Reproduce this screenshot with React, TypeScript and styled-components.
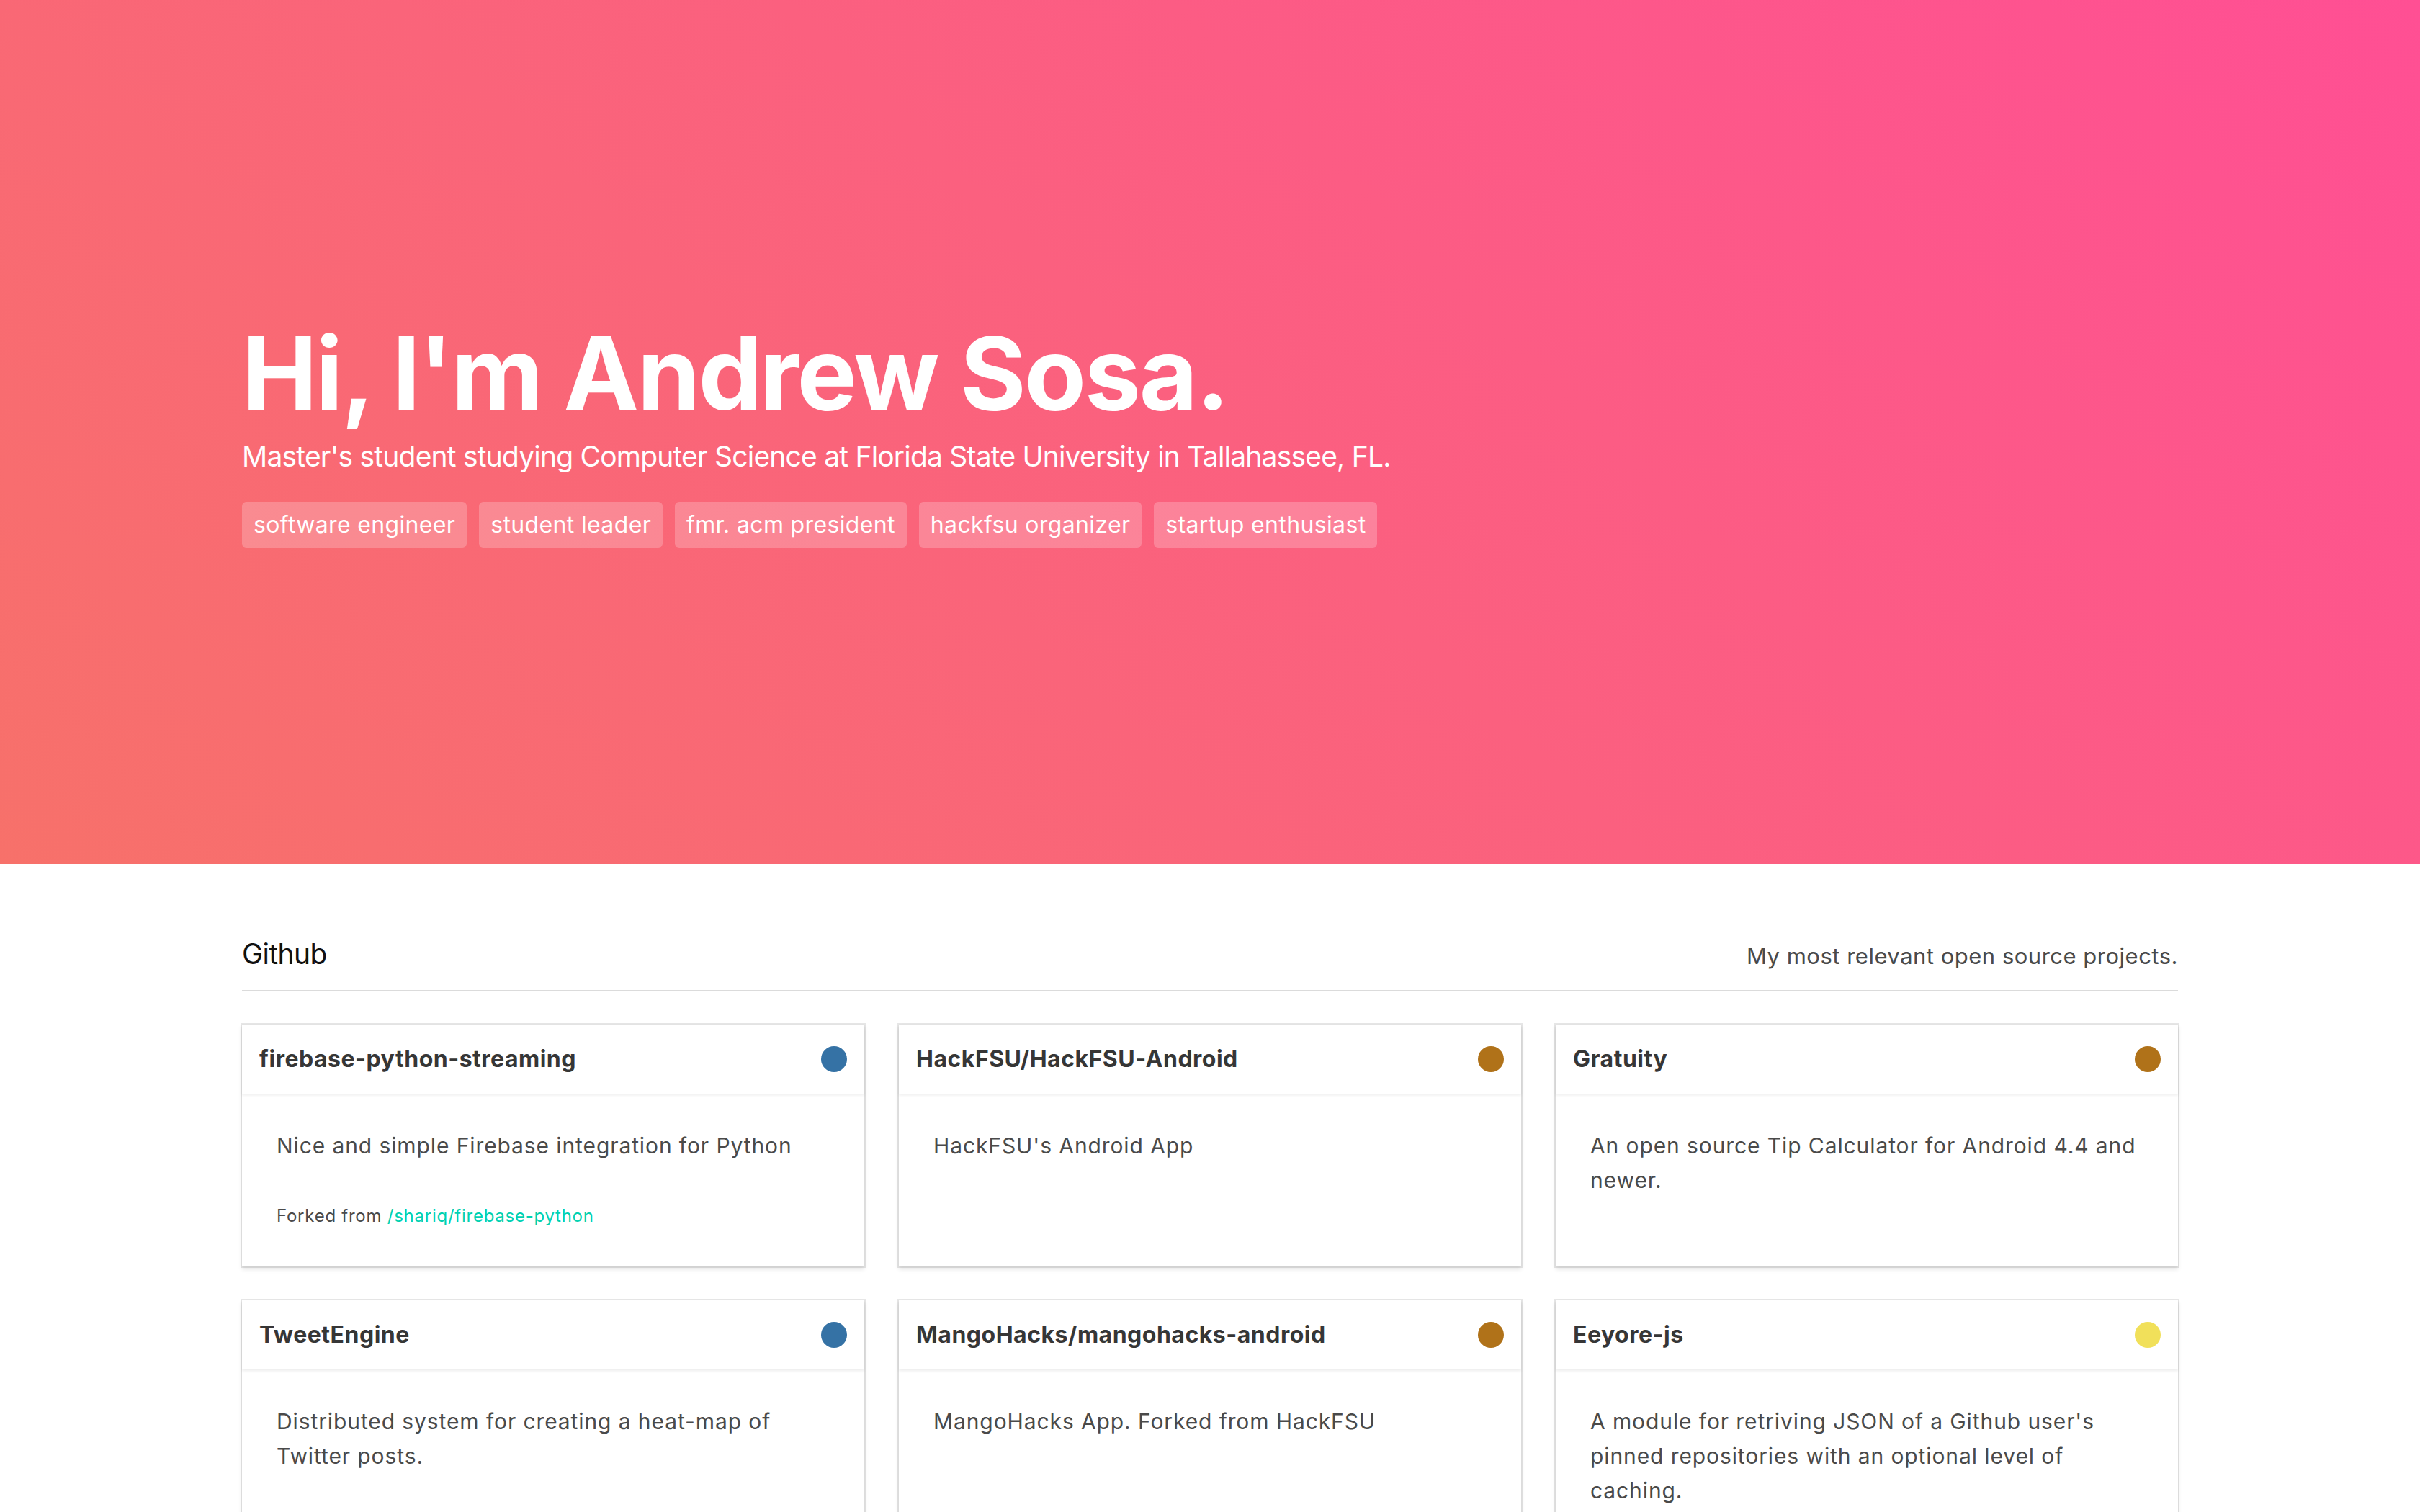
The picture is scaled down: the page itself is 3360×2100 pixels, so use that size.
import React from "react";
import styled, { createGlobalStyle } from "styled-components";

const GlobalStyle = createGlobalStyle`
  html, body { margin: 0; padding: 0; background: #fff; }
  body {
    font-family: Inter, "Noto Sans", "Liberation Sans", sans-serif;
    color: #4a4a4a;
    -webkit-font-smoothing: antialiased;
  }
  * { box-sizing: border-box; }
`;

const Hero = styled.section`
  height: 1200px;
  background: linear-gradient(45deg, #f7716a 0%, #ff4f94 100%);
  display: flex;
  align-items: center;
  padding-top: 8px;
`;

const Container = styled.div`
  width: 2688px;
  margin: 0 auto;
`;

const Title = styled.h1`
  margin: 0;
  font-size: 140px;
  line-height: 140px;
  font-weight: 700;
  color: #fff;
  letter-spacing: -2.4px;
`;

const Subtitle = styled.p`
  margin: 16px 0 0;
  font-size: 39px;
  line-height: 60px;
  font-weight: 400;
  color: #fff;
  letter-spacing: -0.8px;
`;

const Tags = styled.div`
  display: flex;
  gap: 17px;
  margin-top: 33px;
`;

const Tag = styled.span`
  display: inline-flex;
  align-items: center;
  height: 64px;
  padding: 0 16px;
  border-radius: 6px;
  background: rgba(255, 255, 255, 0.22);
  color: #fff;
  font-size: 32px;
  letter-spacing: 0.35px;
`;

const Section = styled.section`
  padding: 100px 0 0;
`;

const SectionHead = styled.div`
  display: flex;
  justify-content: space-between;
  align-items: baseline;
  padding-bottom: 23px;
  border-bottom: 2px solid #dbdbdb;
`;

const SectionTitle = styled.h2`
  margin: 0;
  font-size: 39px;
  line-height: 50px;
  font-weight: 400;
  color: #111;
  letter-spacing: -0.6px;
`;

const SectionNote = styled.p`
  margin: 0;
  font-size: 31px;
  line-height: 48px;
  color: #4a4a4a;
  letter-spacing: 0.5px;
`;

const Grid = styled.div`
  display: grid;
  grid-template-columns: repeat(3, 1fr);
  gap: 47px 48px;
  margin-top: 46px;
`;

const Card = styled.article`
  background: #fff;
  box-shadow: 0 4px 6px rgba(10, 10, 10, 0.1), 0 0 0 2px rgba(10, 10, 10, 0.1);
  display: flex;
  flex-direction: column;
`;

const CardHeader = styled.header`
  display: flex;
  align-items: center;
  justify-content: space-between;
  padding: 24px;
  box-shadow: 0 2px 4px rgba(10, 10, 10, 0.08);
`;

const RepoName = styled.p`
  margin: 0;
  font-size: 32px;
  line-height: 48px;
  font-weight: 700;
  color: #363636;
  letter-spacing: 0.5px;
`;

const LangDot = styled.span<{ $color: string }>`
  width: 36px;
  height: 36px;
  border-radius: 50%;
  background: ${(p) => p.$color};
  flex: none;
`;

const CardBody = styled.div`
  padding: 48px 48px 52px;
`;

const Description = styled.p`
  margin: 0;
  font-size: 30px;
  line-height: 48px;
  color: #4a4a4a;
  letter-spacing: 0.9px;
`;

const Forked = styled.p`
  margin: 56px 0 0;
  font-size: 24px;
  line-height: 36px;
  color: #4a4a4a;
  letter-spacing: 0.75px;
`;

const Link = styled.a`
  color: #00d1b2;
  text-decoration: none;
`;

const PYTHON = "#3572a5";
const JAVA = "#b07219";
const JS = "#f1e05a";

const repos = [
  {
    name: "firebase-python-streaming",
    color: PYTHON,
    desc: "Nice and simple Firebase integration for Python",
    fork: "/shariq/firebase-python",
  },
  { name: "HackFSU/HackFSU-Android", color: JAVA, desc: "HackFSU's Android App" },
  {
    name: "Gratuity",
    color: JAVA,
    desc: "An open source Tip Calculator for Android 4.4 and newer.",
  },
  {
    name: "TweetEngine",
    color: PYTHON,
    desc: "Distributed system for creating a heat-map of Twitter posts.",
  },
  {
    name: "MangoHacks/mangohacks-android",
    color: JAVA,
    desc: "MangoHacks App. Forked from HackFSU",
  },
  {
    name: "Eeyore-js",
    color: JS,
    desc: "A module for retriving JSON of a Github user's pinned repositories with an optional level of caching.",
  },
];

const tags = [
  "software engineer",
  "student leader",
  "fmr. acm president",
  "hackfsu organizer",
  "startup enthusiast",
];

export default function App() {
  return (
    <>
      <GlobalStyle />
      <Hero>
        <Container>
          <Title>Hi, I'm Andrew Sosa.</Title>
          <Subtitle>
            Master's student studying Computer Science at Florida State University in Tallahassee, FL.
          </Subtitle>
          <Tags>
            {tags.map((t) => (
              <Tag key={t}>{t}</Tag>
            ))}
          </Tags>
        </Container>
      </Hero>
      <Section>
        <Container>
          <SectionHead>
            <SectionTitle>Github</SectionTitle>
            <SectionNote>My most relevant open source projects.</SectionNote>
          </SectionHead>
          <Grid>
            {repos.map((r) => (
              <Card key={r.name}>
                <CardHeader>
                  <RepoName>{r.name}</RepoName>
                  <LangDot $color={r.color} />
                </CardHeader>
                <CardBody>
                  <Description>{r.desc}</Description>
                  {r.fork && (
                    <Forked>
                      Forked from <Link href="#">{r.fork}</Link>
                    </Forked>
                  )}
                </CardBody>
              </Card>
            ))}
          </Grid>
        </Container>
      </Section>
    </>
  );
}
